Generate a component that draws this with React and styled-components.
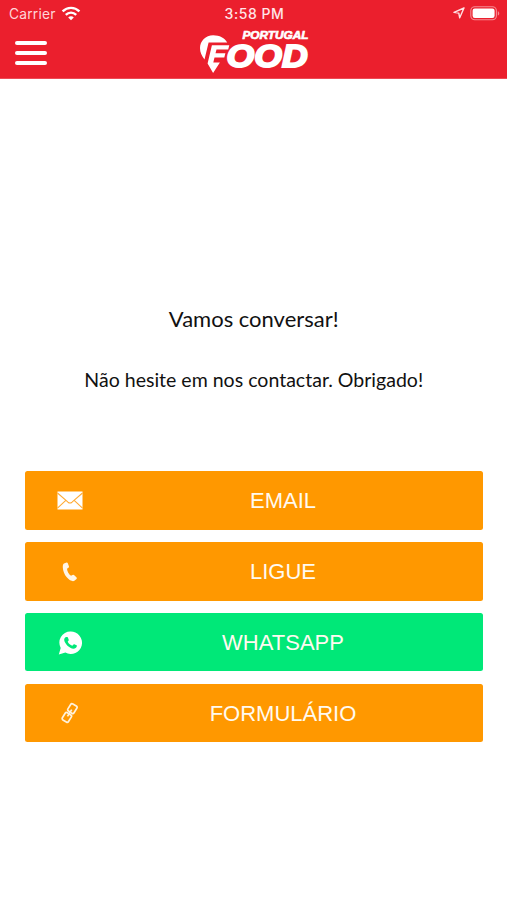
import React from "react";
import styled, { createGlobalStyle } from "styled-components";

const GlobalStyle = createGlobalStyle`
  * {
    box-sizing: border-box;
  }
  body {
    margin: 0;
    background-color: white;
  }
`;

const Screen = styled.div`
  width: 100%;
  min-height: 900px;
  display: flex;
  flex-direction: column;
  background-color: white;
`;

const Header = styled.header`
  height: 79px;
  background-color: #eb1f2d;
  border-bottom: 1px solid #ed4a55;
  color: white;
`;

const StatusBar = styled.div`
  height: 28px;
  padding: 0 7px 0 9px;
  display: grid;
  grid-template-columns: 1fr auto 1fr;
  align-items: center;
  font-family: Inter, sans-serif;
`;

const StatusSide = styled.div`
  height: 26px;
  display: flex;
  align-items: center;
  align-self: start;
  justify-content: ${(props) => (props.$end ? "flex-end" : "flex-start")};
  gap: 5px;
  svg {
    display: block;
  }
`;

const Carrier = styled.span`
  font-size: 13.8px;
  line-height: 28px;
  letter-spacing: 0.2px;
  padding-top: 2px;
  color: #ffd5d8;
`;

const Clock = styled.span`
  font-size: 14px;
  font-weight: 500;
  line-height: 28px;
  letter-spacing: 0.55px;
  color: #ffe6e8;
`;

const NavBar = styled.div`
  height: 50px;
  padding: 0 15px;
  display: grid;
  grid-template-columns: 32px 1fr 32px;
  align-items: center;
  justify-items: center;
`;

const MenuButton = styled.button`
  width: 32px;
  padding: 0;
  border: none;
  background: none;
  display: flex;
  flex-direction: column;
  gap: 5.5px;
`;

const MenuLine = styled.span`
  height: 4.2px;
  border-radius: 2px;
  background-color: white;
`;

const Content = styled.main`
  padding: 226px 24.5px 0 25px;
  display: flex;
  flex-direction: column;
`;

const Title = styled.h1`
  margin: 0;
  font-family: Lato, sans-serif;
  font-size: 22px;
  font-weight: 400;
  line-height: 28px;
  text-align: center;
  color: #111;
`;

const Paragraph = styled.p`
  margin: 33px 0 77px;
  font-family: Lato, sans-serif;
  font-size: 19.55px;
  line-height: 28px;
  text-align: center;
  color: #111;
`;

const ButtonList = styled.div`
  display: flex;
  flex-direction: column;
  gap: 12.2px;
`;

const ContactButton = styled.button`
  height: 58.7px;
  padding: 0 0 0 31.5px;
  border: none;
  border-radius: 2.5px;
  display: flex;
  align-items: center;
  background-color: ${(props) => (props.$green ? "#00e878" : "#ff9800")};
  color: #fffaf0;
`;

const IconBox = styled.span`
  width: 26px;
  padding-top: 1px;
  display: flex;
  justify-content: center;
`;

const Label = styled.span`
  flex: 1;
  padding: 2px 0 0 1px;
  font-family: "Liberation Sans", Arial, sans-serif;
  font-size: 22px;
  line-height: 26px;
  text-align: center;
`;

const WifiIcon = () => (
  <svg width="20" height="15" viewBox="0 0 20 15" fill="none" stroke="white" strokeWidth="2.4">
    <path d="M1.6 5.4C6.4.7 13.6.7 18.4 5.4" />
    <path d="M4.8 8.8C7.8 5.9 12.2 5.9 15.2 8.8" />
    <path d="M10 14.2 7.2 11.4C8.8 10 11.2 10 12.8 11.4Z" fill="white" stroke="none" />
  </svg>
);

const LocationIcon = () => (
  <svg width="12" height="12" viewBox="0 0 12 12" fill="none" stroke="#ffe1e3" strokeWidth="1.4" strokeLinejoin="round">
    <path d="M11 1 1 5.4 5.8 6.1 6.7 10.8Z" />
  </svg>
);

const BatteryIcon = () => (
  <svg width="30" height="15" viewBox="0 0 30 15">
    <rect x="0.8" y="0.8" width="25.6" height="13" rx="4" fill="none" stroke="#f58c94" strokeWidth="1.1" />
    <rect x="2.6" y="2.6" width="22" height="9.4" rx="2.2" fill="white" />
    <path d="M27.8 5.2C29.7 5.9 29.7 8.9 27.8 9.6Z" fill="#f58c94" />
  </svg>
);

// Map pin with the F cut into it, followed by the wordmark
const Logo = () => (
  <svg width="112" height="46" viewBox="0 0 112 46">
    <path d="M15.2 5.2C7.6 5.2 2 11 2 18C2 22.4 3.8 25.8 6.5 29.6L10.6 12.4H29.2C27 8 21.4 5.2 15.2 5.2Z" fill="white" />
    <path d="M13.9 15.2H31.3L30.2 19.5H18.5L17.5 23.3H27.4L26.3 27.4H16.5L15.3 32.4H21.9L15.1 43 9.6 33.4Z" fill="white" />
    <g fill="white" stroke="white" fontFamily="'Liberation Sans', Arial, sans-serif" fontWeight="bold" fontStyle="italic">
      <text x="44.4" y="9.2" fontSize="10" textLength="66" lengthAdjust="spacingAndGlyphs" strokeWidth="0.6">
        PORTUGAL
      </text>
      <text x="28.6" y="36.6" fontSize="32" textLength="81" lengthAdjust="spacingAndGlyphs" strokeWidth="2">
        OOD
      </text>
    </g>
  </svg>
);

const MailIcon = () => (
  <svg width="26" height="19" viewBox="0 0 26 19">
    <rect x="0.5" y="0.5" width="25" height="18" fill="white" />
    <path d="M0.5 2 11 11.2Q13 12.8 15 11.2L25.5 2M0.5 17.2 8.8 9.4M25.5 17.2 17.2 9.4" fill="none" stroke="#ffab35" strokeWidth="1.1" />
  </svg>
);

const PhoneIcon = () => (
  <svg width="16" height="20" viewBox="0 0 16 20">
    <path d="M2 1.6 4.6.6Q5.4.4 5.8 1.2L7 4.4Q7.2 5.3 6.4 5.8L5 6.8C5.2 9.6 6.8 12.3 9 13.8L10.5 12.9Q11.3 12.5 12 13.1L14.6 15.5Q15.2 16.2 14.5 16.9L12.4 18.8C10.8 19.8 7.6 18.7 5 15.6C2.2 12.2 1 8.8.8 5.4C.7 3.5 1 2.2 2 1.6Z" fill="#fff5e5" />
  </svg>
);

const WhatsappIcon = () => (
  <svg width="24" height="24" viewBox="0 0 24 24">
    <path d="M12.4.6A11 11 0 0 0 2.7 16.9L.8 23.4 7.4 21.6A11.2 11.2 0 1 0 12.4.6Z" fill="white" />
    <path d="M8.4 5.9 9.3 6Q9.7 6.1 9.9 6.6L10.7 8.8Q10.9 9.2 10.6 9.6L9.7 10.7C10.9 12.8 12.2 13.9 14.3 14.8L15.5 13.4Q15.8 13 16.3 13.2L18.5 14.3Q19 14.6 18.9 15.1C18.5 17 17.1 17.8 15.5 17.8C11.4 17.6 6.6 12.7 6.2 9.1C6.1 7.4 7.1 6 8.4 5.9Z" fill="#00e878" />
  </svg>
);

const LinkIcon = () => (
  <svg width="20" height="22" viewBox="0 0 20 22" fill="none" stroke="#fff2dc" strokeWidth="1.7">
    <g transform="rotate(32 9.6 11)">
      <rect x="6" y="1.6" width="7.2" height="8.4" rx="1.6" />
      <rect x="6" y="12" width="7.2" height="8.4" rx="1.6" />
      <path d="M9.6 7V15" />
    </g>
  </svg>
);

const contacts = [
  { label: "EMAIL", icon: <MailIcon /> },
  { label: "LIGUE", icon: <PhoneIcon /> },
  { label: "WHATSAPP", icon: <WhatsappIcon />, green: true },
  { label: "FORMULÁRIO", icon: <LinkIcon /> },
];

const App = () => {
  return (
    <>
      <GlobalStyle />
      <Screen>
        <Header>
          <StatusBar>
            <StatusSide>
              <Carrier>Carrier</Carrier>
              <WifiIcon />
            </StatusSide>
            <Clock>3:58 PM</Clock>
            <StatusSide $end>
              <LocationIcon />
              <BatteryIcon />
            </StatusSide>
          </StatusBar>
          <NavBar>
            <MenuButton aria-label="Menu">
              <MenuLine />
              <MenuLine />
              <MenuLine />
            </MenuButton>
            <Logo />
          </NavBar>
        </Header>
        <Content>
          <Title>Vamos conversar!</Title>
          <Paragraph>Não hesite em nos contactar. Obrigado!</Paragraph>
          <ButtonList>
            {contacts.map((contact) => (
              <ContactButton key={contact.label} $green={contact.green}>
                <IconBox>{contact.icon}</IconBox>
                <Label>{contact.label}</Label>
              </ContactButton>
            ))}
          </ButtonList>
        </Content>
      </Screen>
    </>
  );
};

export default App;
